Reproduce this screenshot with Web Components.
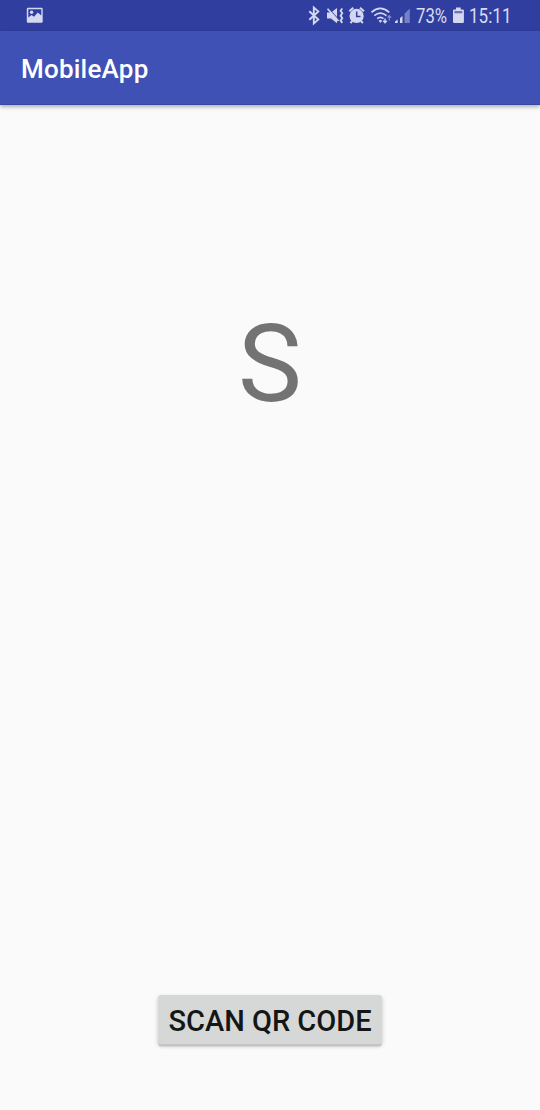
<!DOCTYPE html>
<html lang="en"><head><meta charset="utf-8"><title>MobileApp</title>
<style>html,body{margin:0;height:100%;background:#fafafa;overflow:hidden}</style></head>
<body>
<mobile-screen>
<status-bar slot="status"></status-bar>
<app-bar slot="header">MobileApp</app-bar>
<result-label>S</result-label>
<raised-button slot="action">SCAN QR CODE</raised-button>
</mobile-screen>
<script>
const define = (name, html) => customElements.define(name, class extends HTMLElement {
  constructor() { super(); this.attachShadow({mode:'open'}).innerHTML = html; }
});

define('mobile-screen', `<style>
:host{display:flex;flex-direction:column;height:1110px;width:540px;background:#fafafa;font-family:Roboto,sans-serif}
main{flex:1;display:flex;flex-direction:column;align-items:center;padding-top:197px}
footer{display:flex;justify-content:center;padding-bottom:66px}
</style><slot name="status"></slot><slot name="header"></slot><main><slot></slot></main><footer><slot name="action"></slot></footer>`);

define('status-bar', `<style>
:host{display:flex;height:31px;background:#303f9f;color:#d3d7f0}
svg{display:block;flex:none}
.left{margin-left:26px}.right{margin-left:auto}
text{font-family:Roboto,sans-serif;fill:#d9dcf2}
</style>
<svg class="left" width="18" height="31" fill="#d3d7f0">
<path fill-rule="evenodd" d="M2 7.700h13.500q1.200 0 1.200 1.200v12.600q0 1.200-1.200 1.200H2q-1.200 0-1.200-1.200V8.900q0-1.200 1.200-1.200zM2.300 9.200v8.300l3.200-2.500 2.500 1.700 3.800-4.200 3.500 3V9.200z"/><circle cx="5.600" cy="12.300" r="1.700"/></svg>
<svg class="right" width="234" height="31" viewBox="306 0 234 31" fill="#d3d7f0">
<path d="M309.300 11.300l9 8.300-4.500 3.900V7.500l4.500 3.900-9 8.300" fill="none" stroke="#d3d7f0" stroke-width="1.900"/>
<path d="M327 12.500h4l6-4.500v15.200l-6-4.700h-4z"/>
<path d="M329.500 9.500l8.500 9.300" stroke="#303f9f" stroke-width="1.100"/>
<path d="M327.500 8.800l11 12.200" stroke="#d3d7f0" stroke-width="1.700"/>
<path d="M342.300 8.500l-1.700 2.300 1.700 2.500-1.700 2.500 1.700 2.500-1.700 2.300 1.700 2.300" fill="none" stroke="#d3d7f0" stroke-width="1.800"/>
<circle cx="356.600" cy="15.900" r="7.100"/>
<path d="M349.300 11.300l4-3.600M360 7.700l4 3.600M352.300 20.800l-1.800 2.300M361 20.800l1.800 2.300" stroke="#d3d7f0" stroke-width="2"/>
<path d="M356.700 11.500v5h3.800" fill="none" stroke="#303f9f" stroke-width="1.500"/>
<g fill="none" stroke="#d3d7f0" stroke-width="1.700">
<path d="M371.500 12.300q8.800-7.700 17.700 0"/><path d="M374.300 15.600q6-5 12.200 0"/><path d="M377.200 18.600q3.200-2.600 6.300 0"/></g>
<path d="M378.500 20.600q2-1.200 3.800 0l-1.900 2.300z"/>
<path d="M385 18.500v4M383.200 20.800l1.800 2 1.800-2" fill="none" stroke="#d3d7f0" stroke-width="1.400"/>
<path d="M389.300 20.500V16M387.500 17.700l1.800-2 1.800 2" fill="none" stroke="#8790cf" stroke-width="1.200"/>
<path d="M395 23v-1.500l2.700-2V23z"/><path d="M400 23v-5l2.500-2V23z"/>
<path d="M404.500 23v-9.300l5.300-5.200V23z" fill="#7680c6"/>
<text x="416" y="23.300" font-size="19.500" textLength="31" lengthAdjust="spacingAndGlyphs">73%</text>
<path d="M456 7.500h4.700v2h2q1.200 0 1.200 1.200V21.700q0 1.200-1.200 1.200h-8.500q-1.200 0-1.200-1.200V10.700q0-1.200 1.200-1.200H456z"/>
<path d="M454.500 11h7.800v2.300h-7.800z" fill="#6973bb"/>
<text x="469" y="23.300" font-size="19.500" textLength="42.500" lengthAdjust="spacingAndGlyphs">15:11</text>
</svg>`);

define('app-bar', `<style>
:host{display:flex;align-items:center;box-sizing:border-box;height:74px;padding:3px 21px 0;background:#3f51b5;color:#fff;font-size:26px;font-weight:500;letter-spacing:.22px;line-height:30px;box-shadow:0 2px 4px rgba(0,0,0,.3);border-bottom:1px solid #3949a3;position:relative}
</style><slot></slot>`);

define('result-label', `<style>
:host{display:block;font-size:107.500px;line-height:124px;color:#737373}
</style><slot></slot>`);

define('raised-button', `<style>
:host{display:block}
button{display:block;width:224px;height:49px;padding:2px 0 0;border:0;border-radius:3px;background:#d6d8d7;color:#141616;font:500 29px/49px Roboto,sans-serif;white-space:nowrap;box-shadow:0 3px 0 -.5px #c4c5c4,0 2px 4px rgba(0,0,0,.22)}
</style><button><slot></slot></button>`);
</script>
</body></html>
